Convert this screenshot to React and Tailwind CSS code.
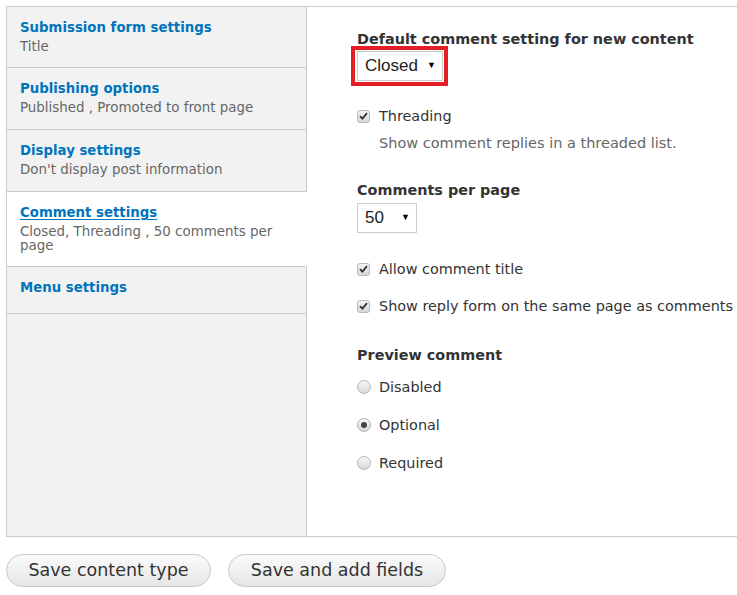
import React from "react";

const font = { fontFamily: '"DejaVu Sans", Verdana, sans-serif' };

function Tab({ title, summary, active, pb }) {
  return (
    <div
      className={
        "pl-[13px] pr-3 pt-[11px] border-b border-[#cccccc] w-[300px] " +
        (active ? "bg-white" : "bg-[#f2f2f2] border-r") +
        " " +
        pb
      }
    >
      <div
        className={
          "text-[13.3px] leading-[20px] font-bold text-[#0074bd] " +
          (active ? "underline underline-offset-2" : "")
        }
      >
        {title}
      </div>
      {summary && (
        <div className="mt-[2px] text-[13.4px] leading-[14px] text-[#666666] pr-4">
          {summary}
        </div>
      )}
    </div>
  );
}

function Check({ label }) {
  return (
    <div className="flex items-center gap-[9px]">
      <span className="w-[13px] h-[13px] rounded-[3px] border border-[#b8b8b8] bg-gradient-to-b from-[#f4f4f4] to-[#d8d8d8] flex items-center justify-center">
        <svg width="9" height="8" viewBox="0 0 9 8">
          <path d="M1 4.2 L3.4 6.6 L8 1.2" stroke="#333" strokeWidth="1.8" fill="none" />
        </svg>
      </span>
      <span className="text-[14.4px] leading-[20px] text-[#333333]">{label}</span>
    </div>
  );
}

function Radio({ label, checked }) {
  return (
    <div className="flex items-center gap-[8px]">
      <span className="w-[14px] h-[14px] rounded-full border border-[#b8b8b8] bg-gradient-to-b from-[#f7f7f7] to-[#d9d9d9] flex items-center justify-center">
        {checked && <span className="w-[6px] h-[6px] rounded-full bg-[#444]" />}
      </span>
      <span className="text-[14.4px] leading-[20px] text-[#333333]">{label}</span>
    </div>
  );
}

function Select({ value, w }) {
  return (
    <div
      className={
        "h-[30px] border border-[#cccccc] bg-white flex items-center justify-between pl-[7px] pr-[6px] " +
        w
      }
      style={{ fontFamily: '"Liberation Sans", Arial, sans-serif' }}
    >
      <span className="text-[17px] text-[#222]">{value}</span>
      <span className="text-[9px] text-black">▼</span>
    </div>
  );
}

export default function App() {
  return (
    <div className="w-[737px] h-[595px] overflow-hidden bg-white" style={font}>
      <div className="pl-[6px] pt-[6px]">
        <div className="w-[760px] h-[531px] border border-[#cccccc] flex">
          <div className="w-[300px] flex flex-col">
            <Tab title="Submission form settings" summary="Title" pb="pb-[13px]" />
            <Tab title="Publishing options" summary="Published , Promoted to front page" pb="pb-[14px]" />
            <Tab title="Display settings" summary="Don't display post information" pb="pb-[14px]" />
            <Tab
              title="Comment settings"
              summary="Closed, Threading , 50 comments per page"
              active
              pb="pb-[13px]"
            />
            <Tab title="Menu settings" pb="pb-[15px]" />
            <div className="flex-1 bg-[#f2f2f2] border-r border-[#cccccc]" />
          </div>
          <div className="flex-1 pl-[50px] pt-[21px]">
            <div className="text-[14.4px] leading-[22px] font-bold text-[#333333]">
              Default comment setting for new content
            </div>
            <div className="relative inline-block mt-[1px]">
              <Select value="Closed" w="w-[86px]" />
              <div className="absolute -left-[6px] -top-[5px] -right-[5px] -bottom-[5px] border-[4px] border-[#e31e24]" />
            </div>
            <div className="mt-[25px]">
              <Check label="Threading" />
              <div className="ml-[22px] mt-[7px] text-[14.5px] leading-[20px] text-[#666666]">
                Show comment replies in a threaded list.
              </div>
            </div>
            <div className="mt-[26px] text-[14.4px] leading-[22px] font-bold text-[#333333]">
              Comments per page
            </div>
            <div className="mt-[2px]">
              <Select value="50" w="w-[60px]" />
            </div>
            <div className="mt-[26px]">
              <Check label="Allow comment title" />
            </div>
            <div className="mt-[17px]">
              <Check label="Show reply form on the same page as comments" />
            </div>
            <div className="mt-[28px] text-[14.4px] leading-[22px] font-bold text-[#333333]">
              Preview comment
            </div>
            <div className="mt-[11px] flex flex-col gap-[18px]">
              <Radio label="Disabled" />
              <Radio label="Optional" checked />
              <Radio label="Required" />
            </div>
          </div>
        </div>
        <div className="flex gap-[17px] mt-[17px]">
          <button className="h-[33px] w-[205px] rounded-full border border-[#c8c8c8] bg-gradient-to-b from-[#fbfbfb] to-[#e6e6e6] text-[17.5px] text-[#333333]">
            Save content type
          </button>
          <button className="h-[33px] w-[218px] rounded-full border border-[#c8c8c8] bg-gradient-to-b from-[#fbfbfb] to-[#e6e6e6] text-[17.5px] text-[#333333]">
            Save and add fields
          </button>
        </div>
      </div>
    </div>
  );
}
